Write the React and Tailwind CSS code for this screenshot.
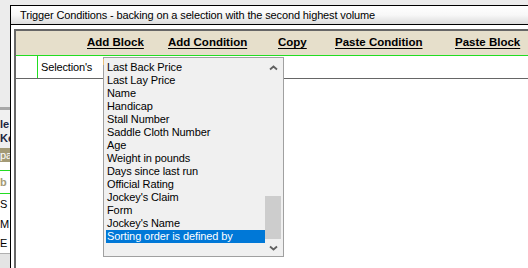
import React from 'react';

const items = [
  'Last Back Price',
  'Last Lay Price',
  'Name',
  'Handicap',
  'Stall Number',
  'Saddle Cloth Number',
  'Age',
  'Weight in pounds',
  'Days since last run',
  'Official Rating',
  "Jockey's Claim",
  'Form',
  "Jockey's Name",
  'Sorting order is defined by',
];

const links = [
  { label: 'Add Block', w: 'w-[81px]' },
  { label: 'Add Condition', w: 'w-[110px]' },
  { label: 'Copy', w: 'w-[57px]' },
  { label: 'Paste Condition', w: 'w-[120px]' },
  { label: 'Paste Block', w: 'w-[70px]' },
];

const Chevron = ({ down }) => (
  <svg width="9" height="6" viewBox="0 0 9 6" className="block">
    <path
      d={down ? 'M1 1.5 L4.5 4.5 L8 1.5' : 'M1 4.5 L4.5 1.5 L8 4.5'}
      fill="none"
      stroke="#606060"
      strokeWidth="1.8"
    />
  </svg>
);

// strip of the window behind, clipped at the left edge
const LeftStrip = () => (
  <div className="w-[10px] h-full flex flex-col overflow-hidden text-[11px] font-bold leading-none shrink-0">
    <div className="h-[107px] bg-[#ececec]" />
    <div className="h-[3px] bg-[#a8a8a8]" />
    <div className="h-[7px] bg-[#f0f0f0]" />
    <div className="h-[14px] bg-[#f0f0f0] text-[#1c2440] flex items-center">le</div>
    <div className="h-[14px] bg-[#f0f0f0] text-[#1c2440] flex items-center">Ke</div>
    <div className="h-[3px] bg-[#f0f0f0]" />
    <div className="h-[14px] bg-[#a39a76] text-white flex items-center font-normal">pa</div>
    <div className="h-[8px] bg-white" />
    <div className="h-[24px] bg-white border-y border-[#22dd22] text-[#a39a76] flex items-center">b</div>
    <div className="h-[20px] bg-white flex items-center font-normal text-black">S</div>
    <div className="h-[20px] bg-white flex items-center font-normal text-black">M</div>
    <div className="h-[19px] bg-white flex items-center font-normal text-black">E</div>
    <div className="flex-1 bg-[#e4e4e4] border-t border-[#b0b0b0]" />
  </div>
);

export default function App() {
  return (
    <div className="relative w-[528px] h-[268px] overflow-hidden flex bg-[#ececec] font-['Liberation_Sans',Arial,sans-serif] text-black">
      <LeftStrip />

      <div className="flex-1 flex flex-col pt-[5px]">
        <div className="flex-1 flex flex-col bg-white border-l border-t border-black">
          {/* title bar */}
          <div className="h-[19px] border-b border-black bg-gradient-to-b from-white via-[#f8f8f8] to-[#dcdcdc] flex items-center pl-[9px] text-[11px] tracking-[-0.13px]">
            Trigger Conditions - backing on a selection with the second highest volume
          </div>

          <div className="flex-1 pt-[4px] pl-[3px] flex flex-col">
            <div className="flex-1 flex flex-col border-l-2 border-t-2 border-[#666]">
              {/* toolbar */}
              <div className="h-[25px] bg-[#e6dfcb] border-b border-[#22dd22] flex items-center pl-[71px] text-[11.5px] font-bold">
                {links.map((l) => (
                  <div key={l.label} className={`${l.w} shrink-0`}>
                    <span className="underline underline-offset-2 decoration-1">{l.label}</span>
                  </div>
                ))}
              </div>

              {/* tab row */}
              <div className="h-[23px] border-b border-[#666] flex pl-[21px]">
                <div className="w-[72px] h-[22px] border-l border-[#22dd22] bg-white flex items-center pl-[3px] text-[11px] tracking-[-0.15px]">
                  Selection's
                </div>
              </div>

              <div className="flex-1 bg-white" />
            </div>
          </div>
        </div>
      </div>

      {/* open dropdown list */}
      <div className="absolute left-[103px] top-[57px] w-[181px] h-[200px] bg-[#f0f0f0] border border-[#a0a0a0] flex">
        <div className="absolute -left-[1px] top-[1px] w-[1px] h-[6px] bg-[#e8c07a]" />
        <div className="flex-1 pt-[3px] pl-[2px] flex flex-col">
          {items.map((t, i) => (
            <div
              key={t}
              className={`h-[13px] flex items-center pl-[1px] text-[11px] tracking-[-0.1px] leading-none ${
                i === items.length - 1 ? 'bg-[#0078d7] text-white' : ''
              }`}
            >
              {t}
            </div>
          ))}
        </div>
        <div className="w-[16px] mr-[2px] flex flex-col">
          <div className="h-[20px] flex items-center justify-center">
            <Chevron />
          </div>
          <div className="flex-1 flex flex-col justify-end">
            <div className="h-[43px] bg-[#cdcdcd]" />
          </div>
          <div className="h-[17px] flex items-center justify-center">
            <Chevron down />
          </div>
        </div>
      </div>
    </div>
  );
}
